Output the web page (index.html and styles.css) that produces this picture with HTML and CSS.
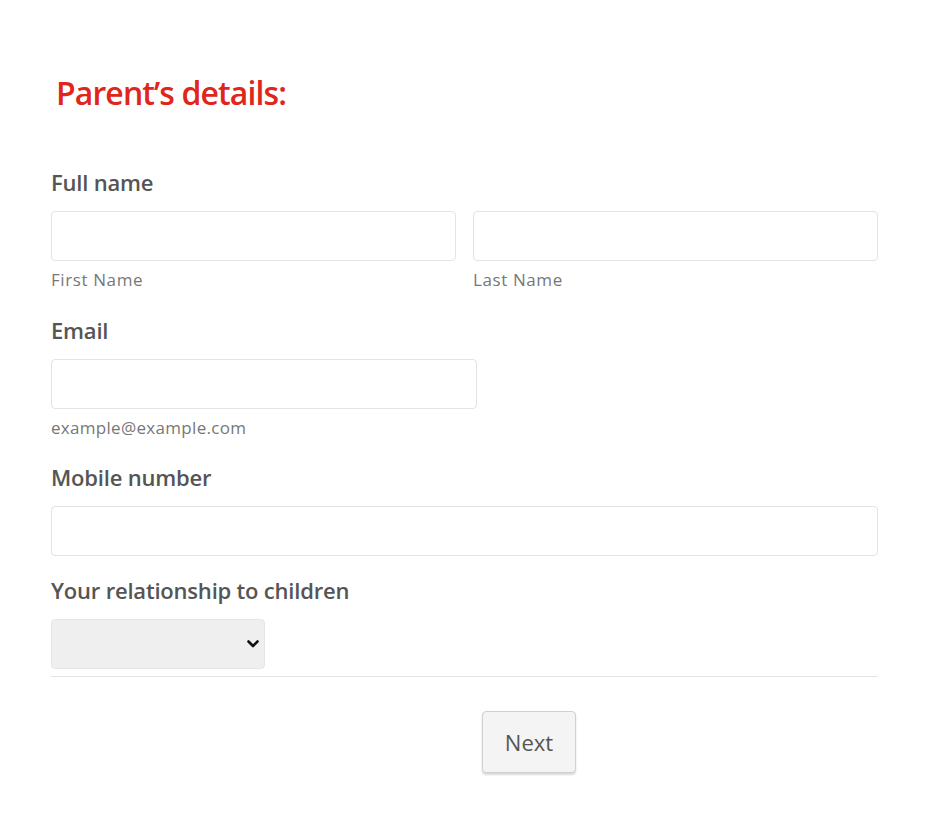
FILE: index.html
```html
<!DOCTYPE html>
<html lang="en">
<head>
    <meta charset="UTF-8">
    <meta name="viewport" content="width=device-width, initial-scale=1.0">
    <title>Parent's details</title>
    <link rel="stylesheet" href="styles.css">
</head>
<body>

<div class="form-container">
    <h2 class="form-title">Parent’s details:</h2>

    <form id="parentForm">
        <div class="field">
            <label class="field-label">Full name</label>
            <div class="name-row">
                <div class="name-col">
                    <input type="text" name="first_name">
                    <span class="sublabel">First Name</span>
                </div>
                <div class="name-col">
                    <input type="text" name="last_name">
                    <span class="sublabel">Last Name</span>
                </div>
            </div>
        </div>

        <div class="field field-hint">
            <label class="field-label">Email</label>
            <input type="email" name="email" class="input-half">
            <span class="sublabel sublabel-plain">example@example.com</span>
        </div>

        <div class="field">
            <label class="field-label">Mobile number</label>
            <input type="tel" name="mobile">
        </div>

        <div class="field field-select">
            <label class="field-label">Your relationship to children</label>
            <div class="select-wrap">
                <select name="relationship">
                    <option value=""></option>
                    <option>Mother</option>
                    <option>Father</option>
                    <option>Guardian</option>
                </select>
                <svg class="select-arrow" width="12" height="8" viewBox="0 0 12 8">
                    <path d="M1.5 1.5 L6 6 L10.5 1.5" fill="none" stroke="#111" stroke-width="2.6" stroke-linecap="round" stroke-linejoin="round"/>
                </svg>
            </div>
        </div>

        <div class="form-footer">
            <button type="button">Next</button>
        </div>
    </form>
</div>

</body>
</html>
```

FILE: styles.css
```css
body {
    font-family: "Open Sans", "Noto Sans", sans-serif;
    background-color: white;
    margin: 0;
    color: #555;
}

.form-container {
    padding: 73px 52px 40px 51px;
}

.form-title {
    color: #e0261b;
    font-size: 32px;
    line-height: 40px;
    font-weight: 600;
    margin: 0 0 54px 5px;
    letter-spacing: -0.9px;
}

.field {
    margin-bottom: 19px;
}

.field-hint {
    margin-bottom: 22px;
}

.field-label {
    display: block;
    font-size: 22px;
    line-height: 30px;
    font-weight: 600;
    color: #555;
    margin-bottom: 14px;
    letter-spacing: -0.2px;
}

input[type="text"], input[type="email"], input[type="tel"] {
    display: block;
    box-sizing: border-box;
    width: 100%;
    height: 50px;
    border: 1px solid #e3e3e3;
    border-radius: 4px;
    padding: 8px 12px;
    font-size: 16px;
    margin: 0;
}

.input-half {
    width: 426px !important;
}

.name-row {
    display: flex;
    gap: 17px;
}

.name-col {
    flex: 1;
}

.sublabel {
    display: block;
    font-size: 17px;
    line-height: 24px;
    color: #777;
    margin-top: 7px;
    margin-bottom: 4px;
    letter-spacing: 0.6px;
}

.sublabel-plain {
    margin-bottom: 0;
    letter-spacing: 0.3px;
}

.field-select {
    margin-bottom: 0;
    padding-bottom: 7px;
    border-bottom: 1px solid #e3e3e3;
}

.select-wrap {
    position: relative;
    width: 214px;
    height: 50px;
}

select {
    display: block;
    width: 214px;
    height: 50px;
    appearance: none;
    background-color: #efefef;
    border: 1px solid #e6e6e6;
    border-radius: 4px;
    font-size: 16px;
}

.select-arrow {
    position: absolute;
    right: 6px;
    top: 21px;
    pointer-events: none;
}

.form-footer {
    padding-top: 34px;
    padding-left: 431px;
}

button {
    width: 94px;
    height: 62px;
    background-color: #f4f4f4;
    border: 1px solid #d0d0d0;
    border-radius: 4px;
    box-shadow: 0 2px 2px rgba(0, 0, 0, 0.15);
    font-family: inherit;
    font-size: 22px;
    color: #555;
    cursor: pointer;
}

button:hover {
    background-color: #eaeaea;
}
```
